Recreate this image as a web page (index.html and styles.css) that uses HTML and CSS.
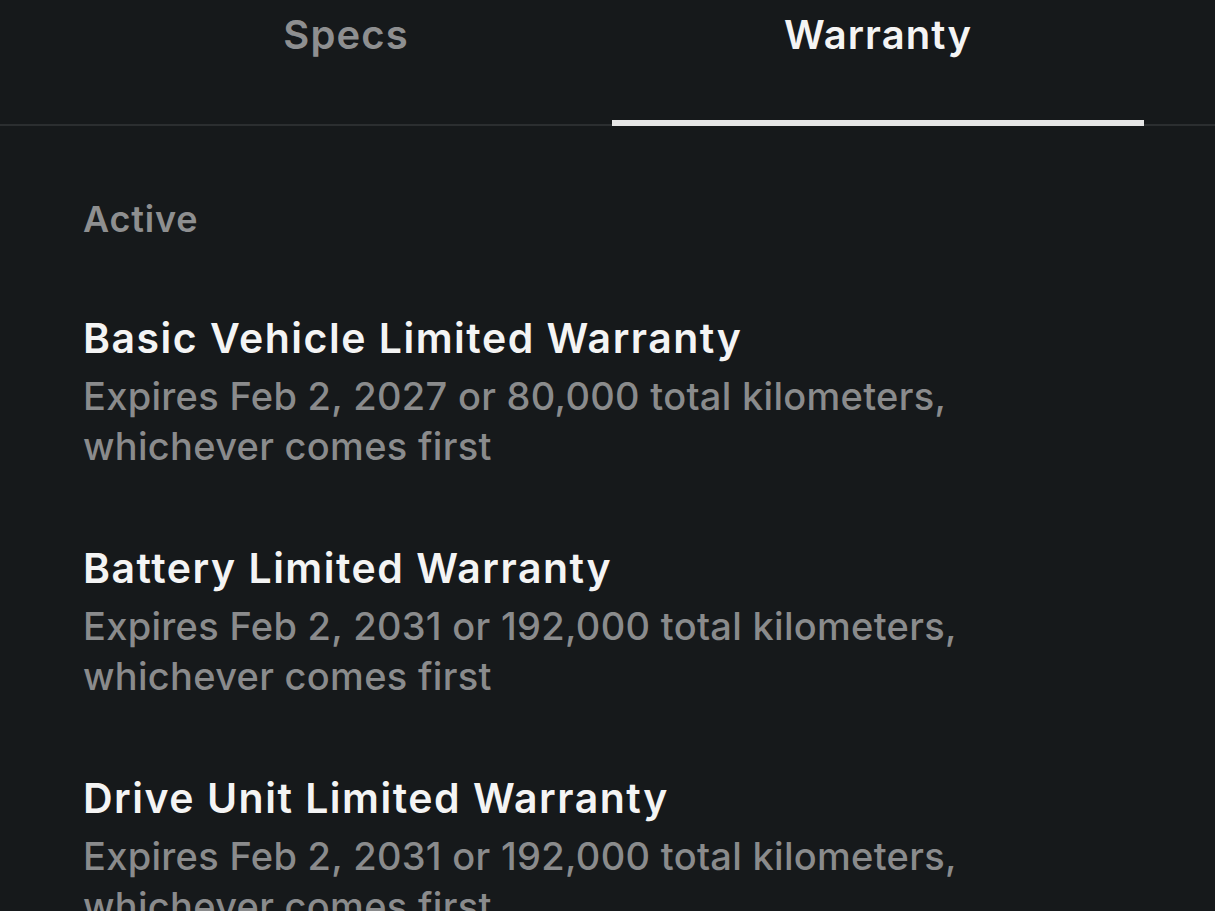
FILE: index.html
```html
<!DOCTYPE html>
<html lang="en">
<head>
<meta charset="utf-8">
<title>Warranty</title>
<link rel="stylesheet" href="styles.css">
</head>
<body>
<div class="tabs-wrap">
  <nav class="tabs">
    <div class="tab">Specs</div>
    <div class="tab active">Warranty</div>
  </nav>
</div>
<main class="content">
  <div class="section-label">Active</div>
  <div class="item">
    <div class="item-title">Basic Vehicle Limited Warranty</div>
    <div class="item-sub">Expires Feb 2, 2027 or 80,000 total kilometers,<br>whichever comes first</div>
  </div>
  <div class="item">
    <div class="item-title">Battery Limited Warranty</div>
    <div class="item-sub">Expires Feb 2, 2031 or 192,000 total kilometers,<br>whichever comes first</div>
  </div>
  <div class="item">
    <div class="item-title">Drive Unit Limited Warranty</div>
    <div class="item-sub">Expires Feb 2, 2031 or 192,000 total kilometers,<br>whichever comes first</div>
  </div>
</main>
</body>
</html>
```
FILE: styles.css
```css
html, body {
  margin: 0;
  padding: 0;
  background: #16191b;
  height: 100%;
  overflow: hidden;
}
body {
  font-family: Inter, "Noto Sans", sans-serif;
  color: #f2f2f2;
}
.tabs-wrap {
  border-bottom: 2px solid #2b2e30;
  padding: 0 71px 0 80px;
}
.tabs {
  display: flex;
}
.tab {
  flex: 1;
  text-align: center;
  font-size: 40px;
  font-weight: 600;
  letter-spacing: 1.1px;
  color: #8e8f90;
  height: 124px;
  line-height: 70px;
  box-sizing: border-box;
}
.tab.active {
  color: #f4f4f4;
  border-bottom: 6px solid #e6e6e6;
  margin-bottom: -2px;
  height: 126px;
}
.content {
  padding: 0 83px;
}
.section-label {
  margin-top: 73px;
  font-size: 36px;
  font-weight: 600;
  letter-spacing: 0.8px;
  color: #8e8f90;
  line-height: 40px;
}
.item {
  margin-top: 72px;
}
.item + .item {
  margin-top: 70px;
}
.item-title {
  font-size: 41px;
  font-weight: 600;
  letter-spacing: 1.5px;
  line-height: 55px;
  margin-bottom: 5px;
  color: #f4f4f4;
}
.item-sub {
  font-size: 38px;
  font-weight: 500;
  letter-spacing: 0.3px;
  line-height: 50px;
  color: #8a8b8c;
}
```
